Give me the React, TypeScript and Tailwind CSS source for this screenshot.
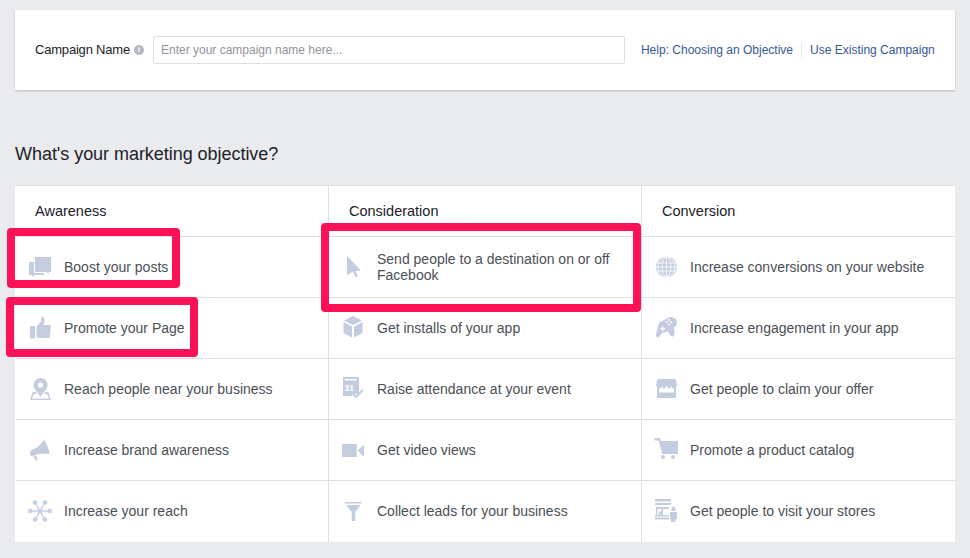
import type { ReactNode } from 'react'

const ICON = '#c4cde0'

function Glyph({ children }: { children: ReactNode }) {
  return (
    <svg viewBox="0 0 24 24" width="24" height="24" fill={ICON} className="shrink-0">
      {children}
    </svg>
  )
}

const icons: Record<string, ReactNode> = {
  posts: (
    <>
      <path d="M1 7h15v13H7l-3 2v-2H1z" />
      <path d="M6.500 1.500H23.500V17.500H21V20l-2.500-2.500H6.500z" stroke="#fff" strokeWidth="1" />
    </>
  ),
  thumb: (
    <>
      <rect x="2" y="10" width="5" height="12.500" />
      <path d="M8.500 10.500 13 5.500 13.500 .5c2.500 0 3.500 2 3 4.500L15.500 9H23l-1.300 13H10.500L8.500 20.500z" />
    </>
  ),
  pin: (
    <>
      <path d="M4.500 15h3.200l1.200 2H6L4 21.500h17L19 17h-3l1.200-2h3.100l2.700 8H2z" />
      <path
        fillRule="evenodd"
        d="M12.500 1a7 7 0 0 1 7 7c0 4-4 7-7 12-3-5-7-8-7-12a7 7 0 0 1 7-7zm0 4.500a2.600 2.600 0 1 0 0 5.200 2.600 2.600 0 0 0 0-5.200z"
      />
    </>
  ),
  megaphone: (
    <>
      <path d="M16 2c1 0 2.500 3.500 6 13.500L10 16l-5 2c-2 .5-3-.5-3-2.500s.5-3 2-3.500l6-3z" />
      <path d="M5 18.500 8 17.500l1.500 3.500c.5 1.500-1.500 2-2 .8z" />
    </>
  ),
  network: (
    <>
      <path d="M12 12 7 3M12 12 17 3M12 12 7 21M12 12 17 21M12 12H1.500M12 12H22.500" stroke={ICON} strokeWidth="1.300" />
      <circle cx="12" cy="12" r="2.200" />
      <circle cx="7" cy="3.500" r="2.200" />
      <circle cx="17" cy="3.500" r="2.200" />
      <circle cx="7" cy="20.500" r="2.200" />
      <circle cx="17" cy="20.500" r="2.200" />
      <circle cx="2.200" cy="12" r="2.200" />
      <circle cx="21.800" cy="12" r="2.200" />
    </>
  ),
  cursor: <path d="M6 1 20 15.500l-5.500.5 2.500 5-2.500 1-2.500-5.500L6 20.500z" />,
  cube: (
    <>
      <path d="M12 0 21 4.500 12 9 3 4.500z" />
      <path d="M2.500 6 11 10.500V21.500L2.500 17z" />
      <path d="M21.500 6 13 10.500V21.500L21.500 17z" />
    </>
  ),
  calendar: (
    <>
      <path fillRule="evenodd" d="M2 0h16v17h-6l-1.500 2H2zM4 2v1.500h12V2z" />
      <text x="3.500" y="14" fontSize="8.500" fontWeight="700" fill="#fff" fontFamily="'Liberation Sans', sans-serif">
        31
      </text>
      <path d="m12 17 3 3 7-7" fill="none" stroke={ICON} strokeWidth="2" />
    </>
  ),
  video: (
    <>
      <rect x="1" y="6" width="14.700" height="13" />
      <path d="M16.700 12.500 23 6.500v12.500z" />
    </>
  ),
  funnel: (
    <>
      <rect x="4" y="3" width="16.500" height="1.500" />
      <path d="M5 6h14.500L14.300 13V22H10.700v-9z" />
    </>
  ),
  globe: (
    <>
      <circle cx="12.500" cy="12" r="10.500" />
      <g fill="none" stroke="#fff" strokeWidth=".8">
        <ellipse cx="12.500" cy="12" rx="4.500" ry="10" />
        <ellipse cx="12.500" cy="12" rx="8.500" ry="10" />
        <path d="M12.500 2v20M2.500 8h20M2 12h21M2.500 16h20" />
      </g>
    </>
  ),
  gamepad: (
    <>
      <path d="M16 1c4 0 7 2 7 6 0 2-1 3.500-3 4l.5 6c.5 3-2.500 5-4 2.500L14 15.500l-6 1.500-3 4c-1.500 1.500-3.500 0-3-2.500L4.500 8.500c.5-2 2-3 4-3.500z" />
      <g fill="#fff">
        <rect x="14" y="3" width="1.800" height="1.800" />
        <rect x="14" y="7.500" width="1.800" height="1.800" />
        <rect x="11.700" y="5.200" width="1.800" height="1.800" />
        <rect x="16.300" y="5.200" width="1.800" height="1.800" />
        <rect x="6.500" y="12" width="4.500" height="1.300" />
        <rect x="8.100" y="10.300" width="1.300" height="4.600" />
      </g>
    </>
  ),
  store: (
    <>
      <path d="M3.500 2h18l2 7.500H1.500z" />
      <path fillRule="evenodd" d="M3 9h19v12H3zM5 9v6.500h15V9z" />
      <g fill="#fff">
        <rect x="1" y="9" width="2" height="2" />
        <rect x="22" y="9" width="2" height="2" />
      </g>
      <g>
        <circle cx="6" cy="10" r="1.600" />
        <circle cx="10" cy="10" r="1.600" />
        <circle cx="15" cy="10" r="1.600" />
        <circle cx="19" cy="10" r="1.600" />
      </g>
    </>
  ),
  cart: (
    <>
      <path d="M0 0h6l1 3h17v13H8.500L8 14.500 4.500 2.500H.8z" />
      <circle cx="9" cy="19" r="2" />
      <circle cx="19" cy="19" r="2" />
    </>
  ),
  visit: (
    <>
      <rect x="1" y="0" width="16" height="2.500" />
      <rect x="1" y="4" width="16" height="2" />
      <path fillRule="evenodd" d="M2 8h13v2H9v6h6v1.500H1V16h1zM3.500 10v6H5v-3.500h2.500V16V10z" />
      <rect x="1" y="18.500" width="14" height="2" />
      <circle cx="19.500" cy="10" r="2.300" />
      <path d="M16.500 13h6l.5 1v6h-1.500v3h-4.500v-3H16v-6z" />
    </>
  ),
}

const columns = [
  {
    title: 'Awareness',
    items: [
      ['posts', 'Boost your posts'],
      ['thumb', 'Promote your Page'],
      ['pin', 'Reach people near your business'],
      ['megaphone', 'Increase brand awareness'],
      ['network', 'Increase your reach'],
    ],
  },
  {
    title: 'Consideration',
    items: [
      ['cursor', 'Send people to a destination on or off Facebook'],
      ['cube', 'Get installs of your app'],
      ['calendar', 'Raise attendance at your event'],
      ['video', 'Get video views'],
      ['funnel', 'Collect leads for your business'],
    ],
  },
  {
    title: 'Conversion',
    items: [
      ['globe', 'Increase conversions on your website'],
      ['gamepad', 'Increase engagement in your app'],
      ['store', 'Get people to claim your offer'],
      ['cart', 'Promote a product catalog'],
      ['visit', 'Get people to visit your stores'],
    ],
  },
]

export default function App() {
  return (
    <div className="relative h-[558px] w-[970px] overflow-hidden bg-[#e9ebee] px-[15px] pt-[10px] font-['Liberation_Sans',Arial,sans-serif]">
      {/* Campaign name */}
      <div className="flex h-[80px] items-center bg-white pl-5 pr-5 shadow-[0_1px_2px_rgba(0,0,0,0.2)]">
        <label className="whitespace-nowrap text-[13px] tracking-[-0.2px] text-[#1d2129]">Campaign Name</label>
        <span className="ml-[4px] flex size-[10px] shrink-0 items-center justify-center rounded-full bg-[#b4b8bf] text-[8px] font-bold leading-none text-white">
          i
        </span>
        <input
          placeholder="Enter your campaign name here..."
          className="ml-[9px] h-[28px] w-[472px] shrink-0 rounded-[2px] border border-[#dddfe2] bg-white px-[7px] text-[12px] text-[#1d2129] outline-none placeholder:text-[#90949c]"
        />
        <a className="ml-[16px] whitespace-nowrap border-r border-[#e9ebee] pr-2 text-[12px] leading-[16px] text-[#365899]">
          Help: Choosing an Objective
        </a>
        <a className="ml-2 whitespace-nowrap text-[12px] leading-[16px] text-[#365899]">
          Use Existing Campaign
        </a>
      </div>

      <h2 className="mt-[52px] text-[18px] leading-[24px] tracking-[-0.04px] text-[#1d2129]">What's your marketing objective?</h2>

      {/* Objectives table */}
      <div className="mt-[19px] grid grid-cols-[313px_313px_314px] border-t border-[#dddfe2] bg-white">
        {columns.map((col, c) => (
          <div key={col.title} className={c === 0 ? 'border-l border-transparent' : 'border-l border-[#dddfe2]'}>
            <div className={c === 0 ? 'flex h-[50px] items-center pl-[19px] pt-px text-[14.5px] text-[#1d2129]' : 'flex h-[50px] items-center pl-[20px] pt-px text-[14.5px] text-[#1d2129]'}>{col.title}</div>
            {col.items.map(([icon, label]) => (
              <div
                key={label}
                className="flex h-[61px] items-center gap-3 border-t border-[#dddfe2] pl-3 pr-5 text-[14px] leading-[16px] text-[#4b4f56] last:h-[62px] last:pb-px"
              >
                <Glyph>{icons[icon]}</Glyph>
                <span>{label}</span>
              </div>
            ))}
          </div>
        ))}
      </div>

      {/* Red annotation boxes */}
      <div className="absolute left-[7px] top-[228px] h-[60px] w-[173px] rounded-[4px] border-[8px] border-[#ff1158]" />
      <div className="absolute left-[6px] top-[297px] h-[60px] w-[192px] rounded-[4px] border-[8px] border-[#ff1158]" />
      <div className="absolute left-[321px] top-[223px] h-[89px] w-[320px] rounded-[4px] border-[8px] border-[#ff1158]" />
    </div>
  )
}
